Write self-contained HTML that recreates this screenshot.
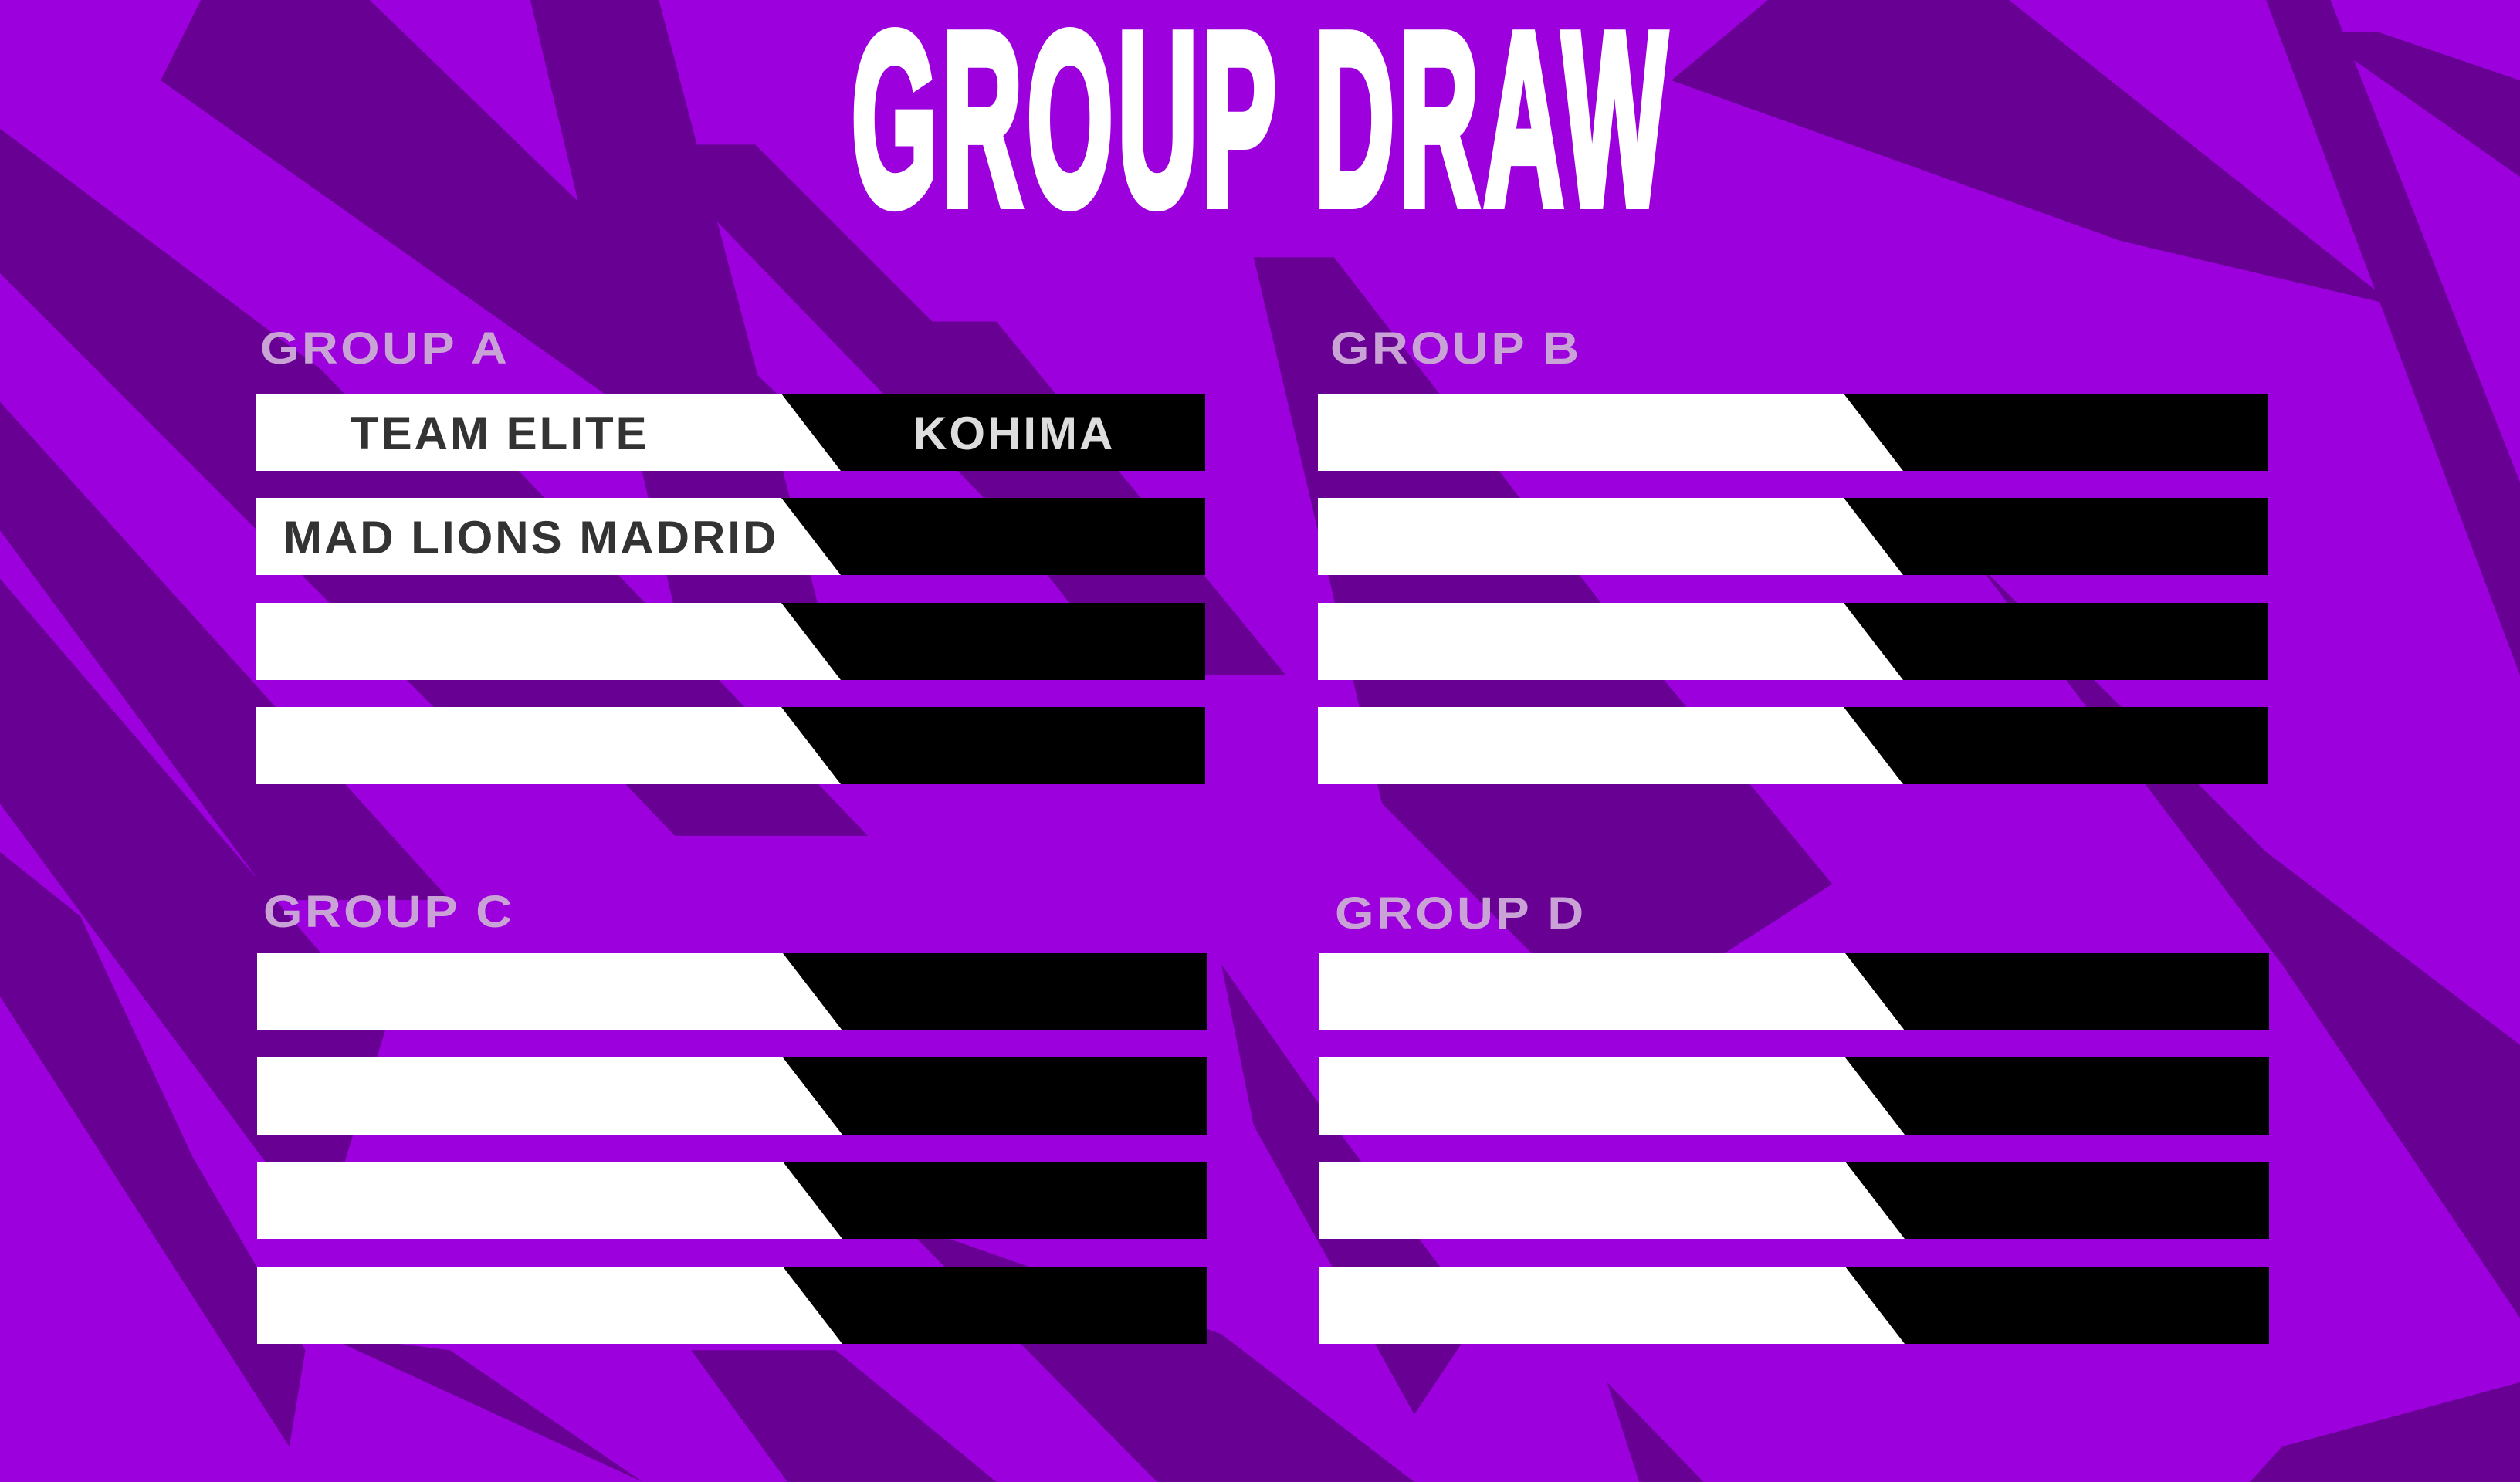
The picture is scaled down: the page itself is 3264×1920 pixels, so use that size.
<!DOCTYPE html>
<html style="overflow:hidden"><head><meta charset="utf-8"><style>
*{margin:0;padding:0}
html,body{width:3264px;height:1920px;overflow:hidden}
body{background:#9c00dc;position:relative;font-family:"Liberation Sans",sans-serif}
svg.bg{position:absolute;left:0;top:0;display:block}
.title{position:absolute;left:1103px;top:20px;width:1062px;height:270px;overflow:hidden;color:#fff;font-weight:bold;font-size:318px;line-height:270px;white-space:nowrap}
.title span{display:inline-block;transform-origin:0 0;transform:scaleX(0.45) scaleY(1.0);-webkit-text-stroke:14px #fff;letter-spacing:14px}
.lbl{position:absolute;color:#c9a3d6;font-weight:bold;font-size:58px;letter-spacing:3px;line-height:60px;transform-origin:0 0;transform:scaleX(1.12)}
.row{position:absolute;width:1230px;height:100px;background:#000;overflow:hidden}
.row .w{position:absolute;left:0;top:0;width:1230px;height:100px;background:#fff;clip-path:polygon(0 0,681px 0,758px 100px,0 100px)}
.row .t{position:absolute;top:0;line-height:104px;font-weight:bold;font-size:60px;color:#333;letter-spacing:3px;white-space:nowrap}
</style></head><body>
<svg class="bg" width="3264" height="1920" viewBox="0 0 1568 922" preserveAspectRatio="none">
<g fill="#680094">
<polygon points="100,50 125,0 230,0 530,290 440,290"/>
<polygon points="0,80 0,170 310,480 440,480 200,230"/>
<polygon points="400,90 470,90 760,380 680,380"/>
<polygon points="0,250 0,330 170,560 280,560"/>
<polygon points="200,290 320,290 540,520 420,520"/>
<polygon points="530,200 620,200 800,420 700,420"/>
<polygon points="780,160 830,160 1000,380 1140,550 1000,640 860,500"/>
<polygon points="1040,50 1100,0 1250,0 1490,190 1320,150"/>
<polygon points="1440,20 1568,110 1568,50 1480,20"/>
<polygon points="1410,0 1450,0 1568,300 1568,420"/>
<polygon points="0,530 0,620 180,900 190,840 120,720 50,570"/>
<polygon points="0,360 0,500 200,770 240,640"/>
<polygon points="200,830 400,922 280,840"/>
<polygon points="330,0 410,0 510,380 420,380"/>
<polygon points="430,840 520,840 620,922 490,922"/>
<polygon points="560,760 760,830 880,922 720,922"/>
<polygon points="1000,860 1060,922 1020,922"/>
<polygon points="1230,350 1410,530 1568,650 1568,820 1420,600"/>
<polygon points="1420,900 1568,860 1568,922 1400,922"/>
<polygon points="760,600 830,700 920,820 880,880 780,700"/>
</g>
</svg>
<div class="title"><span>GROUP DRAW</span></div>

<div class="lbl" style="left:337px;top:422px">GROUP A</div>
<div class="lbl" style="left:1723px;top:422px">GROUP B</div>
<div class="lbl" style="left:341px;top:1152px">GROUP C</div>
<div class="lbl" style="left:1729px;top:1154px">GROUP D</div>

<div class="row" style="left:331px;top:510px"><div class="w"></div><div class="t" style="left:123px">TEAM ELITE</div><div class="t" style="left:852px;color:#ddd">KOHIMA</div></div>
<div class="row" style="left:331px;top:645px"><div class="w"></div><div class="t" style="left:36px">MAD LIONS MADRID</div></div>
<div class="row" style="left:331px;top:781px"><div class="w"></div></div>
<div class="row" style="left:331px;top:916px"><div class="w"></div></div>

<div class="row" style="left:1707px;top:510px"><div class="w"></div></div>
<div class="row" style="left:1707px;top:645px"><div class="w"></div></div>
<div class="row" style="left:1707px;top:781px"><div class="w"></div></div>
<div class="row" style="left:1707px;top:916px"><div class="w"></div></div>

<div class="row" style="left:333px;top:1235px"><div class="w"></div></div>
<div class="row" style="left:333px;top:1370px"><div class="w"></div></div>
<div class="row" style="left:333px;top:1505px"><div class="w"></div></div>
<div class="row" style="left:333px;top:1641px"><div class="w"></div></div>

<div class="row" style="left:1709px;top:1235px"><div class="w"></div></div>
<div class="row" style="left:1709px;top:1370px"><div class="w"></div></div>
<div class="row" style="left:1709px;top:1505px"><div class="w"></div></div>
<div class="row" style="left:1709px;top:1641px"><div class="w"></div></div>
</body></html>
